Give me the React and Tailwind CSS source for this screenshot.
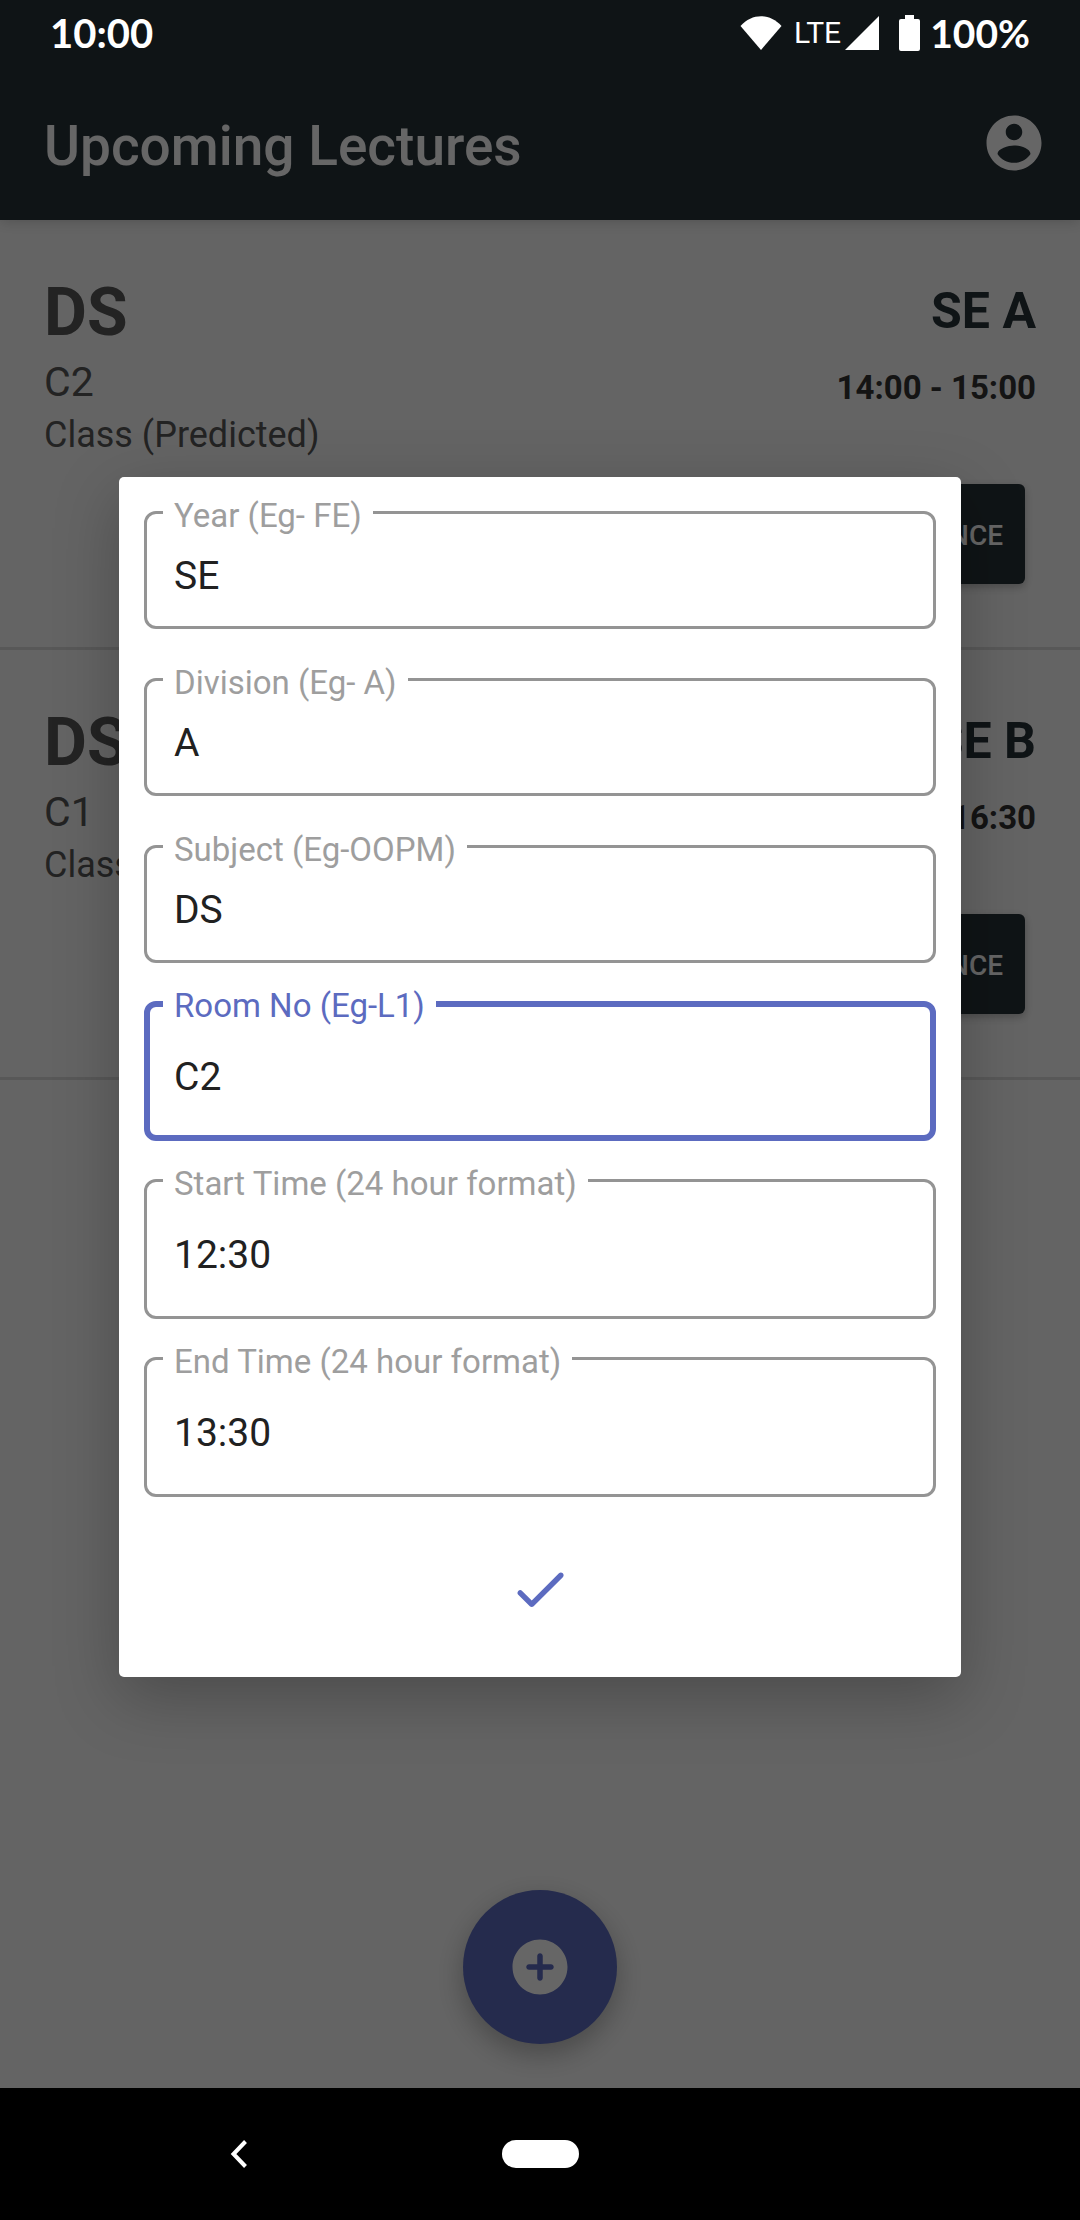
const lectures = [
  { id: 1, subject: 'DS', room: 'C2', kind: 'Class (Predicted)', group: 'SE A', time: '14:00 - 15:00' },
  { id: 2, subject: 'DS', room: 'C1', kind: 'Class (Predicted)', group: 'SE B', time: '15:30 - 16:30' },
];

const compactFields = [
  { id: 'year', label: 'Year (Eg- FE)', value: 'SE' },
  { id: 'division', label: 'Division (Eg- A)', value: 'A' },
  { id: 'subject', label: 'Subject (Eg-OOPM)', value: 'DS' },
];

const tallFields = [
  { id: 'room', label: 'Room No (Eg-L1)', value: 'C2', active: true },
  { id: 'start', label: 'Start Time (24 hour format)', value: '12:30' },
  { id: 'end', label: 'End Time (24 hour format)', value: '13:30' },
];

function StatusBar() {
  return (
    <div className="absolute inset-x-0 top-0 z-30 flex h-[66px] items-center justify-between px-[50px] text-white">
      <span className="font-['Lato',sans-serif] text-[40px] leading-[48px] font-bold">10:00</span>
      <div className="flex items-center">
        <svg className="h-[34px] w-[42px]" viewBox="0 0 42 34" fill="currentColor" aria-hidden="true">
          <path d="M0.5 10C12 -3 30 -3 41.500 10L21 34Z" />
        </svg>
        <span className="ml-3 text-[30px] leading-[40px]">LTE</span>
        <svg className="ml-1 h-[34px] w-[34px]" viewBox="0 0 34 34" fill="currentColor" aria-hidden="true">
          <path d="M34 0V34H0Z" />
        </svg>
        <svg className="ml-5 h-9 w-[21px]" viewBox="0 0 21 36" fill="currentColor" aria-hidden="true">
          <path d="M6 0H15V4H19Q21 4 21 6V34Q21 36 19 36H2Q0 36 0 34V6Q0 4 2 4H6Z" />
        </svg>
        <span className="ml-[10px] font-['Lato',sans-serif] text-[39px] leading-[48px] font-bold">100%</span>
      </div>
    </div>
  );
}

function LectureCard({ lecture }) {
  return (
    <li className="border-b-[3px] border-[#dcdcdc] pt-[54px] pb-[63px]">
      <div className="flex justify-between px-11">
        <div className="flex flex-col text-[#575757]">
          <h2 className="text-[66px] leading-[78px] font-bold">{lecture.subject}</h2>
          <p className="mt-[6px] text-[41px] leading-[48px]">{lecture.room}</p>
          <p className="mt-2 text-[36px] leading-[42px]">{lecture.kind}</p>
        </div>
        <div className="flex flex-col items-end gap-[27px] pt-[7px]">
          <p className="text-[50px] leading-[60px] font-bold text-[#263238]">{lecture.group}</p>
          <p className="text-[33px] leading-[40px] font-bold text-[#333333]">{lecture.time}</p>
        </div>
      </div>
      <div className="mt-7 flex justify-end px-[55px]">
        <button
          type="button"
          className="h-[100px] rounded-[6px] bg-[#263238] px-[22px] pt-[3px] text-[28px] font-medium text-white shadow-[0_3px_8px_rgba(0,0,0,0.25)]"
        >
          ATTENDANCE
        </button>
      </div>
    </li>
  );
}

const outlines = {
  compact: 'border-[3px] border-[#949494] pt-[39px] pb-[27px] pl-[27px]',
  tall: 'border-[3px] border-[#949494] pt-[50px] pb-[38px] pl-[27px]',
  active: 'border-[6px] border-[#5c6bc0] pt-[47px] pb-[35px] pl-[24px]',
};

function Field({ field, outline }) {
  return (
    <div className="relative">
      <label
        htmlFor={field.id}
        className={`absolute -top-[14px] left-[19px] bg-white px-[11px] text-[33px] leading-[38px] ${
          field.active ? 'text-[#5c6bc0]' : 'text-[#9e9e9e]'
        }`}
      >
        {field.label}
      </label>
      <input
        id={field.id}
        type="text"
        defaultValue={field.value}
        className={`block w-full rounded-[12px] bg-white text-[39px] leading-[46px] text-[#212121] outline-none ${outlines[outline]}`}
      />
    </div>
  );
}

export default function App() {
  return (
    <div className="relative flex min-h-screen flex-col bg-[#fafafa] font-['Roboto',sans-serif]">
      <StatusBar />

      <header className="relative bg-[#263238] pt-[66px] text-white shadow-[0_1px_14px_rgba(0,0,0,0.2)]">
        <div className="flex h-[154px] items-center justify-between pr-[33px] pl-11">
          <h1 className="pt-[6px] text-[55px] leading-[64px] font-medium">Upcoming Lectures</h1>
          <button type="button" aria-label="Account">
            <svg className="h-[66px] w-[66px]" viewBox="0 0 24 24" fill="currentColor" aria-hidden="true">
              <path d="M12 2C6.480 2 2 6.480 2 12s4.480 10 10 10 10-4.480 10-10S17.520 2 12 2zm0 3c1.660 0 3 1.340 3 3s-1.340 3-3 3-3-1.340-3-3 1.340-3 3-3zm0 14.200c-2.500 0-4.710-1.280-6-3.220.03-1.990 4-3.080 6-3.080 1.990 0 5.970 1.090 6 3.080-1.290 1.940-3.500 3.220-6 3.220z" />
            </svg>
          </button>
        </div>
      </header>

      <main className="flex flex-1 flex-col justify-between">
        <ul>
          {lectures.map((lecture) => (
            <LectureCard key={lecture.id} lecture={lecture} />
          ))}
        </ul>
        <button
          type="button"
          aria-label="Add lecture"
          className="mb-11 flex h-[154px] w-[154px] items-center justify-center self-center rounded-full bg-[#5c6bc0] text-white shadow-[0_10px_28px_rgba(0,0,0,0.28)]"
        >
          <svg className="h-[66px] w-[66px]" viewBox="0 0 24 24" fill="currentColor" aria-hidden="true">
            <path d="M12 2C6.480 2 2 6.480 2 12s4.480 10 10 10 10-4.480 10-10S17.520 2 12 2zm4 11h-3v3c0 .55-.45 1-1 1s-1-.45-1-1v-3H8c-.55 0-1-.45-1-1s.45-1 1-1h3V8c0-.55.45-1 1-1s1 .45 1 1v3h3c.55 0 1 .45 1 1s-.45 1-1 1z" />
          </svg>
        </button>
      </main>

      <nav className="relative z-30 grid h-[132px] grid-cols-[1fr_auto_1fr] items-center bg-black text-white">
        <button type="button" aria-label="Back" className="ml-[227px] justify-self-start">
          <svg className="h-[30px] w-6" viewBox="0 0 24 30" fill="none" stroke="currentColor" strokeWidth="4" aria-hidden="true">
            <path d="M18.500 2.500L6.500 15L18.500 27.500" />
          </svg>
        </button>
        <button type="button" aria-label="Home" className="h-7 w-[77px] rounded-full bg-white" />
      </nav>

      <div className="absolute inset-0 z-20 flex items-center justify-center bg-black/60 pt-[66px] pb-[132px]">
        <form
          role="dialog"
          aria-label="Edit lecture"
          className="mx-[119px] flex-1 rounded-[5px] bg-white px-[25px] pt-[34px] pb-[55px] shadow-[0_20px_64px_rgba(0,0,0,0.25)]"
        >
          <div className="flex flex-col gap-[49px]">
            {compactFields.map((field) => (
              <Field key={field.id} field={field} outline="compact" />
            ))}
          </div>
          <div className="mt-[38px] flex flex-col gap-[38px]">
            {tallFields.map((field) => (
              <Field key={field.id} field={field} outline={field.active ? 'active' : 'tall'} />
            ))}
          </div>
          <button type="button" aria-label="Save" className="mx-auto mt-[59px] block text-[#5c6bc0]">
            <svg className="h-[66px] w-[66px]" viewBox="0 0 24 24" fill="currentColor" aria-hidden="true">
              <path d="M9 16.200l-3.500-3.500c-.39-.39-1.010-.39-1.400 0-.39.39-.39 1.010 0 1.400l4.190 4.190c.39.39 1.020.39 1.410 0L20.300 7.700c.39-.39.39-1.010 0-1.400-.39-.39-1.010-.39-1.400 0L9 16.200z" />
            </svg>
          </button>
        </form>
      </div>
    </div>
  );
}
